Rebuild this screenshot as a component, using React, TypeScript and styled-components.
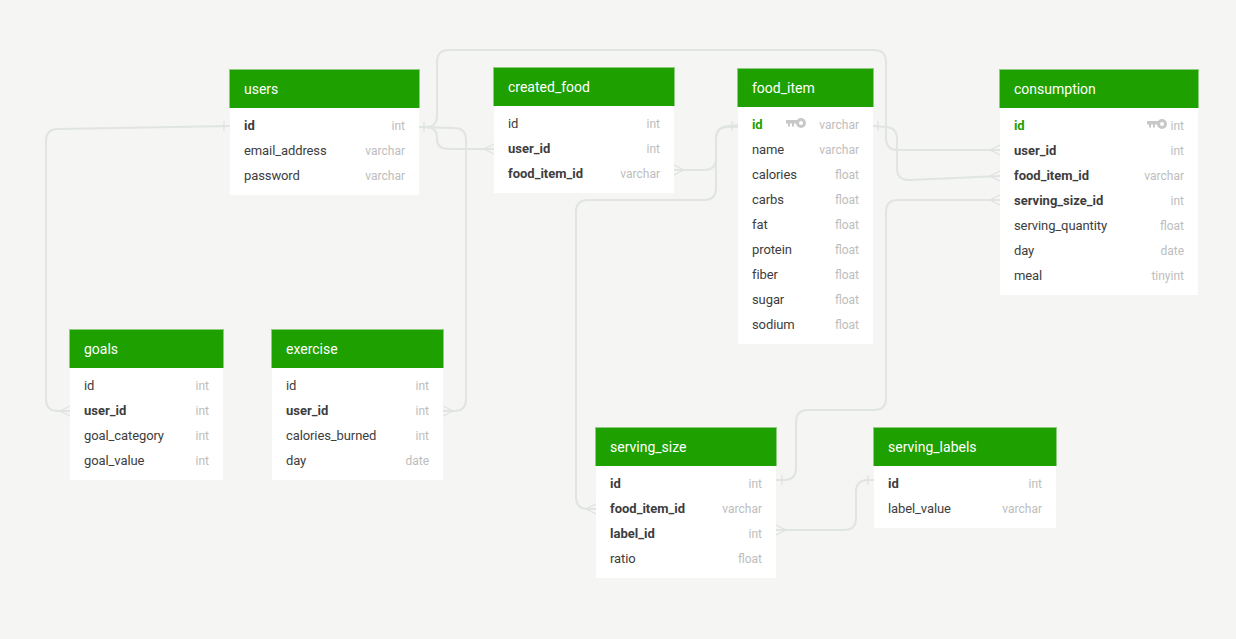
import styled, {createGlobalStyle} from 'styled-components';

interface Column {
   name: string;
   type: string;
   bold?: boolean;
   primary?: boolean;
   keyGap?: number;
}
interface TableData {
   title: string;
   x: number;
   y: number;
   width: number;
   columns: Column[];
}

const TABLES: TableData[] = [
   {
      title: 'users',
      x: 230,
      y: 69,
      width: 189,
      columns: [
         {name: 'id', type: 'int', bold: true},
         {name: 'email_address', type: 'varchar'},
         {name: 'password', type: 'varchar'},
      ],
   },
   {
      title: 'created_food',
      x: 494,
      y: 67,
      width: 180,
      columns: [
         {name: 'id', type: 'int'},
         {name: 'user_id', type: 'int', bold: true},
         {name: 'food_item_id', type: 'varchar', bold: true},
      ],
   },
   {
      title: 'food_item',
      x: 738,
      y: 68,
      width: 135,
      columns: [
         {name: 'id', type: 'varchar', primary: true, keyGap: 13},
         {name: 'name', type: 'varchar'},
         {name: 'calories', type: 'float'},
         {name: 'carbs', type: 'float'},
         {name: 'fat', type: 'float'},
         {name: 'protein', type: 'float'},
         {name: 'fiber', type: 'float'},
         {name: 'sugar', type: 'float'},
         {name: 'sodium', type: 'float'},
      ],
   },
   {
      title: 'consumption',
      x: 1000,
      y: 69,
      width: 198,
      columns: [
         {name: 'id', type: 'int', primary: true, keyGap: 4},
         {name: 'user_id', type: 'int', bold: true},
         {name: 'food_item_id', type: 'varchar', bold: true},
         {name: 'serving_size_id', type: 'int', bold: true},
         {name: 'serving_quantity', type: 'float'},
         {name: 'day', type: 'date'},
         {name: 'meal', type: 'tinyint'},
      ],
   },
   {
      title: 'goals',
      x: 70,
      y: 329,
      width: 153,
      columns: [
         {name: 'id', type: 'int'},
         {name: 'user_id', type: 'int', bold: true},
         {name: 'goal_category', type: 'int'},
         {name: 'goal_value', type: 'int'},
      ],
   },
   {
      title: 'exercise',
      x: 272,
      y: 329,
      width: 171,
      columns: [
         {name: 'id', type: 'int'},
         {name: 'user_id', type: 'int', bold: true},
         {name: 'calories_burned', type: 'int'},
         {name: 'day', type: 'date'},
      ],
   },
   {
      title: 'serving_size',
      x: 596,
      y: 427,
      width: 180,
      columns: [
         {name: 'id', type: 'int', bold: true},
         {name: 'food_item_id', type: 'varchar', bold: true},
         {name: 'label_id', type: 'int', bold: true},
         {name: 'ratio', type: 'float'},
      ],
   },
   {
      title: 'serving_labels',
      x: 874,
      y: 427,
      width: 182,
      columns: [
         {name: 'id', type: 'int', bold: true},
         {name: 'label_value', type: 'varchar'},
      ],
   },
];

// relation lines between the tables
const LINKS = [
   'M230 126 L58 129 Q46 129 46 141 L46 399 Q46 411 58 411 L70 411',
   'M419 127 L426 127 Q437 127 437 138 L437 139 Q437 149 449 149 L494 149',
   'M419 127 L454 128 Q466 128 466 140 L466 399 Q466 411 454 411 L443 411',
   'M419 127 L426 127 Q437 127 437 116 L437 62 Q437 50 449 50 L874 50 Q886 50 886 62 L886 138 Q886 150 898 150 L1000 150',
   'M674 170 L704 170 Q716 170 716 158 L716 139 Q716 127 728 126 L738 125',
   'M738 127 L728 127 Q716 127 716 139 L716 188 Q716 200 704 200 L588 200 Q576 200 576 212 L576 497 Q576 509 588 509 L596 509',
   'M873 126 L885 127 Q897 127 897 139 L897 168 Q897 180 909 180 L1000 176',
   'M776 480 L784 480 Q796 480 796 468 L796 422 Q796 410 808 410 L874 410 Q886 410 886 398 L886 212 Q886 200 898 200 L1000 200',
   'M776 530 L844 530 Q856 530 856 518 L856 492 Q856 480 868 480 L874 480',
];

// crow's feet and "one" ticks at the line ends
const MARKS = [
   'M224 121 L224 131',
   'M424 122 L424 132',
   'M484 149 L494 144 M484 149 L494 154',
   'M684 170 L674 165 M684 170 L674 175',
   'M732 121 L732 131',
   'M878 121 L878 131',
   'M990 150 L1000 145 M990 150 L1000 155',
   'M990 176 L1000 171 M990 176 L1000 181',
   'M990 200 L1000 195 M990 200 L1000 205',
   'M60 411 L70 406 M60 411 L70 416',
   'M453 411 L443 406 M453 411 L443 416',
   'M586 509 L596 504 M586 509 L596 514',
   'M782 475 L782 485',
   'M786 530 L776 525 M786 530 L776 535',
   'M868 475 L868 485',
];

const GlobalStyle = createGlobalStyle`
   html, body {
      margin: 0;
      padding: 0;
      background: #f5f5f3;
   }
`;
const Canvas = styled.div`
   position: relative;
   width: 1236px;
   height: 639px;
   overflow: hidden;
   background: #f5f5f3;
   font-family: Roboto, 'Liberation Sans', sans-serif;
`;
const Lines = styled.svg`
   position: absolute;
   inset: 0;
`;
const Link = styled.path`
   fill: none;
   stroke: #e0e5e2;
   stroke-width: 2;
`;
const Mark = styled.path`
   fill: none;
   stroke: #dde2df;
   stroke-width: 1.2;
`;
const Table = styled.div<{$x: number; $y: number; $width: number}>`
   position: absolute;
   left: ${props => props.$x}px;
   top: ${props => props.$y}px;
   width: ${props => props.$width}px;
   padding-bottom: 7px;
   background: #fff;
`;
const Header = styled.div`
   box-sizing: border-box;
   height: 39px;
   margin: 0 -1px;
   padding: 0 14px;
   display: flex;
   align-items: center;
   background: #1ea000;
   border: 1px solid #8fcc80;
   border-bottom: none;
   color: #fff;
   font-size: 14px;
`;
const Rows = styled.div`
   padding-top: 5px;
`;
const Row = styled.div`
   height: 25px;
   padding: 0 14px;
   display: flex;
   align-items: center;
   font-size: 13px;
`;
const ColumnName = styled.span<{$bold?: boolean; $primary?: boolean}>`
   flex: 1;
   letter-spacing: ${props => (props.$bold ? 0 : -0.1)}px;
   color: ${props => (props.$primary ? '#1ea000' : '#3d3d3d')};
   font-weight: ${props => (props.$bold || props.$primary ? 700 : 400)};
`;
const ColumnType = styled.span`
   color: #bdbdbd;
   font-size: 12px;
`;
const KeyIcon = styled.svg<{$gap: number}>`
   margin-right: ${props => props.$gap}px;
   margin-bottom: 4px;
`;

const Key = ({gap}: {gap: number}) => (
   <KeyIcon $gap={gap} width='20' height='10' viewBox='0 0 20 10'>
      <circle cx='15' cy='5' r='3.5' fill='none' stroke='#c8c8c8' strokeWidth='3' />
      <path d='M0 2 H11 V5.5 H8 V8.5 H6 V5.5 H4 V8.5 H2 V5.5 H0 Z' fill='#c8c8c8' />
   </KeyIcon>
);

const App = () => (
   <Canvas>
      <GlobalStyle />
      <Lines width='1236' height='639'>
         {LINKS.map(d => (
            <Link key={d} d={d} />
         ))}
         {MARKS.map(d => (
            <Mark key={d} d={d} />
         ))}
      </Lines>
      {TABLES.map(table => (
         <Table key={table.title} $x={table.x} $y={table.y} $width={table.width}>
            <Header>{table.title}</Header>
            <Rows>
               {table.columns.map(column => (
                  <Row key={column.name}>
                     <ColumnName $bold={column.bold} $primary={column.primary}>
                        {column.name}
                     </ColumnName>
                     {column.keyGap !== undefined && <Key gap={column.keyGap} />}
                     <ColumnType>{column.type}</ColumnType>
                  </Row>
               ))}
            </Rows>
         </Table>
      ))}
   </Canvas>
);
export default App;
